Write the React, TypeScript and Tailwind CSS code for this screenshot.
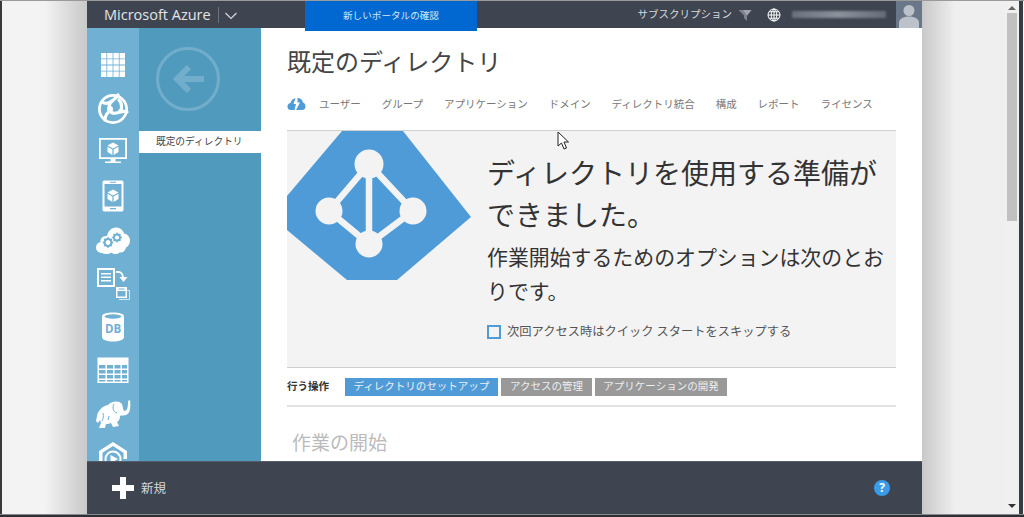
import React from "react";

const Cube = ({ x, y, s = 1 }: { x: number; y: number; s?: number }) => (
  <g transform={`translate(${x} ${y}) scale(${s})`}>
    <path d="M0-6 5.500-3 0 0-5.500-3Z" fill="#fff" />
    <path d="M-5.500-1.800-.6 1V6.500L-5.500 3.600Z" fill="#fff" />
    <path d="M5.500-1.800.6 1V6.500L5.500 3.600Z" fill="#fff" />
  </g>
);

const Gear = ({ x, y, r }: { x: number; y: number; r: number }) => (
  <g transform={`translate(${x} ${y})`}>
    <circle r={r} fill="none" stroke="#70b1d3" strokeWidth={r * 0.6} />
    {[0, 45, 90, 135, 180, 225, 270, 315].map((a) => (
      <rect key={a} x={-0.9} y={-r - 1.800} width={1.800} height={2.200} fill="#70b1d3" transform={`rotate(${a})`} />
    ))}
  </g>
);

const NavIcons = [
  <svg key="grid" width="34" height="34" viewBox="0 0 34 34">
    <path fill="#fff" d="M5 5h5.400v5.400H5zM11.200 5h5.400v5.400h-5.400zM17.400 5h5.400v5.400h-5.400zM23.600 5H29v5.400h-5.400zM5 11.200h5.400v5.400H5zM11.200 11.200h5.400v5.400h-5.400zM17.400 11.200h5.400v5.400h-5.400zM23.600 11.200H29v5.400h-5.400zM5 17.400h5.400v5.400H5zM11.200 17.400h5.400v5.400h-5.400zM17.400 17.400h5.400v5.400h-5.400zM23.600 17.400H29v5.400h-5.400zM5 23.600h5.400V29H5zM11.200 23.600h5.400V29h-5.400zM17.400 23.600h5.400V29h-5.400zM23.600 23.600H29V29h-5.400z" />
  </svg>,
  <svg key="web" width="34" height="34" viewBox="0 0 34 34">
    <g fill="none" stroke="#fff" strokeWidth="3.200" strokeLinecap="round">
      <circle cx="17" cy="17" r="13.600" strokeWidth="2.800" />
      <path d="M6 10C9 12 12 12 16 9 19 7 21 5 22 3" />
      <path d="M16 9C13 12 12 16 14 19 16 22 21 22 25 19L31 20" />
      <path d="M14 19C11 21 9 25 9 28" />
      <path d="M25 19C26 15 26 11 23 8" />
    </g>
    <circle cx="14" cy="17" r="3" fill="#fff" />
    <circle cx="25" cy="19" r="2.600" fill="#fff" />
  </svg>,
  <svg key="vm" width="34" height="34" viewBox="0 0 34 34">
    <path fill="#fff" fillRule="evenodd" d="M3 3h28v21H19.500v2.500H25V28H9v-1.500h5.500V24H3zM4.800 4.800v17.400h24.400V4.800z" />
    <Cube x={17} y={13.500} s={1} />
  </svg>,
  <svg key="mobile" width="34" height="34" viewBox="0 0 34 34">
    <path fill="#fff" fillRule="evenodd" d="M8.500 1.500C7 1.500 6.500 2.200 6.500 3.500v27c0 1.300.5 2 2 2h17c1.500 0 2-.7 2-2v-27c0-1.300-.5-2-2-2zM8.500 5h17v22.500h-17zM14 29h6v1.200h-6zM14 2.800h6V3.800h-6z" />
    <Cube x={17} y={16.500} s={1} />
  </svg>,
  <svg key="cloud" width="36" height="32" viewBox="0 0 36 32">
    <path fill="#fff" d="M7 29C3.500 29 1 26.500 1 23.500 1 20.500 3 18.500 5.500 18 5 14.500 8 11.500 12 12 13 7 16.500 3.500 21 3.500 25 3.500 28 6 29 9.500 32.500 10 35 13 35 16.500 35 20 33 22.500 31 23.500 30.500 27 27.500 29 24.500 28.500 22.500 30.500 18.500 30.500 16.500 28.500 13.500 30.500 9.500 30.500 7 29Z" />
    <Gear x={13} y={18.500} r={3.400} />
    <Gear x={22} y={13.500} r={3} />
  </svg>,
  <svg key="sync" width="36" height="34" viewBox="0 0 36 34">
    <path fill="#fff" fillRule="evenodd" d="M2 2h18v19H2zM4 4v15h14V4zM6 7h10v1.600H6zM6 10.500h10v1.600H6zM6 14h10v1.600H6z" />
    <path fill="none" stroke="#fff" strokeWidth="1.800" d="M21 6c3.500-.5 6.500 0 7 5" />
    <path fill="#fff" d="M24.500 11h8L28.500 16z" />
    <path fill="none" stroke="#fff" strokeOpacity=".7" d="M24 24.500h10.500V33.500H24" />
    <path fill="#fff" fillRule="evenodd" d="M21 21h11v11H21zM22.500 25v5.500h8V25z" />
    <path fill="#70b1d3" d="M23.500 22.500h6v1h-6z" />
  </svg>,
  <svg key="db" width="34" height="34" viewBox="0 0 34 34">
    <path fill="#fff" d="M6 6.500C6 3.500 11 2.500 17 2.500s11 1 11 4V27c0 2.800-5 4.500-11 4.500S6 29.800 6 27z" />
    <ellipse cx="17" cy="6.500" rx="8.500" ry="2.200" fill="#70b1d3" />
    <text x="17" y="23" textAnchor="middle" fill="#70b1d3" fontSize="11.500" fontWeight="700" fontFamily="'Open Sans', sans-serif">DB</text>
  </svg>,
  <svg key="table" width="34" height="34" viewBox="0 0 34 34">
    <path fill="#fff" fillRule="evenodd" d="M1.500 4.500h31v25.500h-31zM3 12h6.500v3.500H3zM11 12h6v3.500h-6zM18.500 12h6v3.500h-6zM26 12h5v3.500h-5zM3 17h6.500v3.500H3zM11 17h6v3.500h-6zM18.500 17h6v3.500h-6zM26 17h5v3.500h-5zM3 22h6.500v3.500H3zM11 22h6v3.500h-6zM18.500 22h6v3.500h-6zM26 22h5v3.500h-5zM3 27h6.500v1.500H3zM11 27h6v1.500h-6zM18.500 27h6v1.500h-6zM26 27h5v1.500h-5z" />
  </svg>,
  <svg key="hadoop" width="36" height="30" viewBox="0 0 36 30">
    <path fill="#fff" d="M2 17C3 11 8 7 13 6 16 2 24 1 27 5 28 8 28 12 30 12 33 11 33 6 33 2L35 1C36 8 35 15 31 16 28 17 26 16 25 17 25 20 24 22 22 23L24 27 18 28 16 24C14 25 12 25 11 25L10 29 4 29 6 24 5 21 3 24 1 22Z" />
    <path fill="none" stroke="#70b1d3" strokeWidth="1" d="M19 5C17 8 18 13 22 14M8 14C9 18 8 20 7 22M14 17 13 21" />
  </svg>,
  <svg key="media" width="34" height="34" viewBox="0 0 34 34">
    <path fill="#fff" d="M17 1 31 10v8h-3.500v-6.200L17 5 6.500 11.800V28H3V10z" />
    <circle cx="17" cy="18" r="7.500" fill="none" stroke="#fff" strokeWidth="2" />
    <path fill="#fff" d="M14.500 14 22 18l-7.500 4z" />
  </svg>,
];

const tabs = ["ユーザー", "グループ", "アプリケーション", "ドメイン", "ディレクトリ統合", "構成", "レポート", "ライセンス"];

export default function App() {
  return (
    <div className="relative flex h-[517px] w-[1024px] overflow-hidden bg-[#f0f0f0] font-['Open_Sans','Noto_Sans_CJK_JP',sans-serif]">
      <div className="w-[2px] shrink-0 bg-[#3a3a3a]" />
      <div className="w-[85px] shrink-0 bg-gradient-to-r from-[#f3f3f3] from-50% to-[#c9c9c9]" />

      <main className="relative mt-px flex h-[513px] w-[835px] shrink-0 flex-col">
        <header className="relative flex h-[27px] shrink-0 items-center bg-[#3e4551] text-[#d5d8dc]">
          <span className="ml-[17px] mt-[2px] w-[114px] text-[14.500px] leading-none text-[#e3e5e8]">Microsoft Azure</span>
          <span className="h-[16px] w-px bg-[#697180]" />
          <svg width="14" height="10" viewBox="0 0 14 10" className="ml-[5px] mt-[2px]">
            <path d="M1.500 2 7 7.500 12.500 2" fill="none" stroke="#d5d8dc" strokeWidth="1.200" />
          </svg>
          <div className="ml-auto flex h-full items-center">
            <span className="text-[10.500px] leading-none">サブスクリプション</span>
            <svg width="14" height="14" viewBox="0 0 14 14" className="ml-[6px]">
              <path fill="#7c838e" d="M.5 2h13L9 7.500V13L6 10V7.500z" />
              <path fill="#a0a5ad" d="M5 2h8.500L9 7.500z" />
            </svg>
            <svg width="14" height="14" viewBox="0 0 14 14" className="ml-[15px]">
              <g fill="none" stroke="#fff" strokeWidth="1">
                <circle cx="7" cy="7" r="6" />
                <ellipse cx="7" cy="7" rx="2.800" ry="6" />
                <path d="M1 7h12M7 1v12M2 3.800h10M2 10.200h10" />
              </g>
            </svg>
            <div className="ml-[11px] h-[7px] w-[94px] bg-gradient-to-r from-[#68717d] via-[#8b929c] to-[#636c78] blur-[1px]" />
            <div className="ml-[10px] h-full w-[26px] overflow-hidden bg-[#697789]">
              <svg width="26" height="27" viewBox="0 0 26 27">
                <circle cx="13" cy="9.500" r="5.500" fill="#bcc2c9" />
                <path fill="#bcc2c9" d="M3 27v-5c0-4 4-6.500 10-6.500s10 2.500 10 6.500v5z" />
              </svg>
            </div>
          </div>
        </header>

        <a className="absolute left-[218px] top-0 flex h-[30px] w-[172px] items-center justify-center bg-[#0068d0] text-[9.600px] leading-none text-[#d8e8f8]">
          新しいポータルの確認
        </a>

        <div className="flex min-h-0 flex-1">
          <nav className="flex w-[52px] shrink-0 flex-col items-center overflow-hidden bg-[#70b1d3] pt-[15.500px]">
            {NavIcons.map((icon, i) => (
              <div key={i} className="flex h-[43.600px] w-full shrink-0 items-center justify-center">
                {icon}
              </div>
            ))}
          </nav>

          <aside className="flex w-[122px] shrink-0 flex-col bg-[#509abd]">
            <svg width="64" height="64" viewBox="0 0 64 64" className="ml-[17px] mt-[19px]">
              <circle cx="32" cy="32" r="30.500" fill="none" stroke="#72aecb" strokeWidth="3" />
              <path d="M48 32H22" stroke="#72aecb" strokeWidth="6" />
              <path d="M33 20 21 32l12 12" fill="none" stroke="#72aecb" strokeWidth="6" />
            </svg>
            <div className="mt-[20px] flex h-[22px] items-center bg-white pl-[17px] text-[9.700px] leading-none text-[#444]">
              既定のディレクトリ
            </div>
          </aside>

          <section className="min-w-0 flex-1 overflow-hidden bg-white px-[26px]">
            <h1 className="mt-[19px] text-[24px] leading-[30px] text-[#444]">既定のディレクトリ</h1>
            <div className="mt-[16px] flex h-[22px] items-center">
              <svg width="19" height="14" viewBox="0 0 19 14">
                <path fill="#4f9bd8" d="M4 13C1.500 13 .5 11.500.5 9.500S2 6 3.500 6C4 3.500 6 1.500 8.500 1L6.500 7H9L7.500 13zM10.500 1c3 0 5 2 5.500 4.500 1.500.5 2.500 2 2.500 4S17 13 15 13H9L13 5.500h-2.500z" />
              </svg>
              <div className="ml-[13px] flex gap-[20.900px] text-[10.500px] leading-none text-[#777]">
                {tabs.map((t) => (
                  <span key={t}>{t}</span>
                ))}
              </div>
            </div>

            <div className="mt-[15px] flex h-[238px] w-[609px] border-y border-[#d0d0d0] bg-[#f3f3f3]">
              <svg width="184" height="150" viewBox="0 0 184 150" className="shrink-0">
                <path fill="#4f9bd8" d="M55 0h61l68 86-74 63H60L0 99V65z" />
                <g stroke="#f3f3f3" strokeWidth="6.500" fill="none">
                  <path d="M82 33 42 80l40 33 44-33zM82 33v80" />
                </g>
                <circle cx="82" cy="33" r="14.500" fill="#f3f3f3" />
                <circle cx="42" cy="80" r="13.500" fill="#f3f3f3" />
                <circle cx="126" cy="80" r="13.500" fill="#f3f3f3" />
                <circle cx="82" cy="113" r="13.500" fill="#f3f3f3" />
              </svg>
              <div className="ml-[16px] min-w-0 flex-1 pt-[21px]">
                <h2 className="text-[28px] leading-[42px] text-[#333]">ディレクトリを使用する準備ができました。</h2>
                <p className="mt-[4px] w-[400px] text-[20.900px] leading-[34px] text-[#333]">作業開始するためのオプションは次のとおりです。</p>
                <label className="mt-[17px] flex items-center">
                  <span className="h-[14px] w-[14px] border-2 border-[#4f9bd8]" />
                  <span className="ml-[6px] text-[12.250px] leading-none text-[#555]">次回アクセス時はクイック スタートをスキップする</span>
                </label>
              </div>
            </div>

            <div className="flex h-[39px] w-[609px] items-center border-b-2 border-[#e2e2e2]">
              <span className="w-[58px] text-[10.500px] font-bold leading-none text-[#333]">行う操作</span>
              <div className="flex gap-[3px] text-[10.500px] leading-none text-[#eee]">
                <span className="flex h-[18px] w-[153px] items-center justify-center bg-[#4f9bd8]">ディレクトリのセットアップ</span>
                <span className="flex h-[18px] w-[91px] items-center justify-center bg-[#999]">アクセスの管理</span>
                <span className="flex h-[18px] w-[132px] items-center justify-center bg-[#999]">アプリケーションの開発</span>
              </div>
            </div>

            <h3 className="ml-[5px] mt-[23px] text-[19px] leading-[26px] text-[#bbb]">作業の開始</h3>
          </section>
        </div>

        <footer className="flex h-[53px] shrink-0 items-center border-t border-[#565c68] bg-[#3e4551] pl-[25px] pr-[32px]">
          <svg width="22" height="22" viewBox="0 0 22 22">
            <path fill="#fff" d="M8 0h6v8h8v6h-8v8H8v-8H0V8h8z" />
          </svg>
          <span className="ml-[7px] mt-[2px] text-[12.500px] leading-none text-[#d5d8dc]">新規</span>
          <span className="ml-auto flex h-[16px] w-[16px] items-center justify-center rounded-full bg-[#3a9be8] text-[12px] font-bold leading-none text-white">?</span>
        </footer>
      </main>

      <div className="w-[83px] shrink-0 bg-gradient-to-r from-[#c9c9c9] to-[#efefef] to-40%" />
      <div className="flex w-[14px] shrink-0 flex-col items-center bg-[#f0f0f0] pt-[6px]">
        <svg width="8" height="4" viewBox="0 0 8 4"><path d="M4 0 8 4H0z" fill="#666" /></svg>
        <div className="mt-[3px] h-[208px] w-[10px] bg-[#c1c1c1]" />
        <svg width="8" height="4" viewBox="0 0 8 4" className="mb-[9px] mt-auto"><path d="M4 4 8 0H0z" fill="#333" /></svg>
      </div>
      <div className="w-[4px] shrink-0 bg-[#383c42]" />
      <div className="flex-1 bg-[#f6f6f6]" />

      <div className="absolute inset-x-0 top-0 h-px bg-[#9a9a9a]" />
      <div className="absolute inset-x-0 bottom-0 h-[3px] border-t border-[#8a8a8a] bg-[#2c2f36]" />

      <svg width="13" height="19" viewBox="0 0 13 19" className="absolute left-[557px] top-[131px]">
        <path d="M1 1v14l3.500-3 2.500 6 2.500-1-2.500-6H11.500z" fill="#fff" stroke="#222" strokeWidth="1" />
      </svg>
    </div>
  );
}
